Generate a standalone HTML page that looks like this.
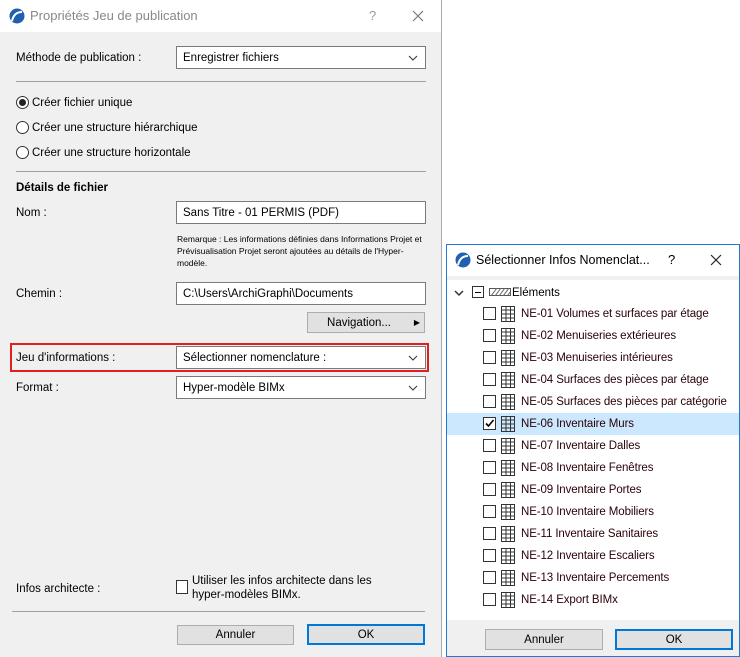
<!DOCTYPE html>
<html><head><meta charset="utf-8"><style>
*{box-sizing:border-box;margin:0;padding:0}
body{width:740px;height:657px;background:#fff;font-family:"Liberation Sans",sans-serif;font-size:11.5px;line-height:16px;color:#000;position:relative;overflow:hidden;white-space:nowrap}
.a{position:absolute}
.dlg{left:0;top:0;width:442px;height:657px;background:#f0f0f0;border-right:1px solid #aaa}
.tb{background:#fff}
.sel{background:#fff;border:1px solid #7a7a7a;height:23px;padding:3px 6px}
.chev{position:absolute;right:7px;top:7px}
.hr{height:1px;background:#a0a0a0}
.btn{background:#e1e1e1;border:1px solid #adadad;text-align:center;line-height:20px}
.ok{border:2px solid #0078d7;line-height:18px}
.radio{width:13px;height:13px;border:1px solid #333;border-radius:50%;background:#fff}
.cb{width:13px;height:13px;border:1px solid #333;background:#fff}
.row{left:447px;width:292px;height:22px}
.row .cb{position:absolute;left:36px;top:4px}
.row .g{position:absolute;left:54px;top:3px}
.row span{position:absolute;left:74px;top:3px;color:#2a0008;letter-spacing:-0.1px}
</style></head><body>
<div class="a dlg">
 <div class="a tb" style="left:0;top:0;width:441px;height:32px"></div>
 <svg class="a" style="left:9px;top:8px" width="16" height="16"><circle cx="8" cy="8" r="7.5" fill="#2060b0"/><path d="M3 13 Q5 4 13 4" stroke="#fff" stroke-width="2" fill="none"/></svg>
 <div class="a" style="left:30px;top:8px;font-size:13px;color:#888">Propriétés Jeu de publication</div>
 <div class="a" style="left:369px;top:8px;font-size:13px;color:#999">?</div>
 <svg class="a" style="left:412px;top:10px" width="12" height="12"><path d="M1 1l10 10M11 1L1 11" stroke="#777" stroke-width="1.2"/></svg>
 <div class="a" style="left:16px;top:50px">Méthode de publication :</div>
 <div class="a sel" style="left:176px;top:46px;width:250px">Enregistrer fichiers<svg class="chev" width="10" height="8"><path d="M1 2l4 4 4-4" stroke="#333" fill="none"/></svg></div>
 <div class="a hr" style="left:16px;top:81px;width:410px"></div>
 <div class="a radio" style="left:16px;top:96px"><div style="width:7px;height:7px;border-radius:50%;background:#222;margin:2px"></div></div>
 <div class="a" style="left:32px;top:95px">Créer fichier unique</div>
 <div class="a radio" style="left:16px;top:121px"></div>
 <div class="a" style="left:32px;top:120px">Créer une structure hiérarchique</div>
 <div class="a radio" style="left:16px;top:146px"></div>
 <div class="a" style="left:32px;top:145px">Créer une structure horizontale</div>
 <div class="a hr" style="left:16px;top:171px;width:410px"></div>
 <div class="a" style="left:16px;top:180px;font-weight:bold">Détails de fichier</div>
 <div class="a" style="left:16px;top:205px">Nom :</div>
 <div class="a sel" style="left:176px;top:201px;width:250px">Sans Titre - 01 PERMIS (PDF)</div>
 <div class="a" style="left:177px;top:233px;font-size:8.5px;line-height:12px;width:255px;white-space:normal">Remarque : Les informations définies dans Informations Projet et Prévisualisation Projet seront ajoutées au détails de l'Hyper-modèle.</div>
 <div class="a" style="left:16px;top:286px">Chemin :</div>
 <div class="a sel" style="left:176px;top:282px;width:250px">C:\Users\ArchiGraphi\Documents</div>
 <div class="a btn" style="left:307px;top:312px;width:118px;height:21px;padding-right:14px">Navigation...<span style="position:absolute;right:4px;top:0;font-size:8px">▶</span></div>
 <div class="a" style="left:10px;top:343px;width:419px;height:29px;border:2px solid #e02020"></div>
 <div class="a" style="left:16px;top:350px">Jeu d'informations :</div>
 <div class="a sel" style="left:176px;top:346px;width:250px">Sélectionner nomenclature :<svg class="chev" width="10" height="8"><path d="M1 2l4 4 4-4" stroke="#333" fill="none"/></svg></div>
 <div class="a" style="left:16px;top:380px">Format :</div>
 <div class="a sel" style="left:176px;top:376px;width:250px">Hyper-modèle BIMx<svg class="chev" width="10" height="8"><path d="M1 2l4 4 4-4" stroke="#333" fill="none"/></svg></div>
 <div class="a" style="left:16px;top:581px">Infos architecte :</div>
 <div class="a cb" style="left:176px;top:580px;width:12px;height:14px"></div>
 <div class="a" style="left:192px;top:574px;line-height:14px">Utiliser les infos architecte dans les<br>hyper-modèles BIMx.</div>
 <div class="a hr" style="left:12px;top:611px;width:413px"></div>
 <div class="a btn" style="left:177px;top:625px;width:117px;height:20px;line-height:19px">Annuler</div>
 <div class="a btn ok" style="left:307px;top:624px;width:118px;height:21px">OK</div>
</div>
<div class="a" style="left:446px;top:244px;width:294px;height:413px;background:#fff;border:1px solid #1e7bd6"></div>
<svg class="a" style="left:455px;top:252px" width="16" height="16"><circle cx="8" cy="8" r="7.5" fill="#2060b0"/><path d="M3 13 Q5 4 13 4" stroke="#fff" stroke-width="2" fill="none"/></svg>
<div class="a" style="left:476px;top:252px;font-size:12.5px">Sélectionner Infos Nomenclat...</div>
<div class="a" style="left:668px;top:252px;font-size:13px">?</div>
<svg class="a" style="left:710px;top:254px" width="12" height="12"><path d="M1 1l10 10M11 1L1 11" stroke="#222" stroke-width="1.2"/></svg>
<div class="a" style="left:447px;top:276px;width:292px;height:4px;background:#f0f0f0"></div>
<svg class="a" style="left:454px;top:289px" width="10" height="8"><path d="M1 2l4 4 4-4" stroke="#333" stroke-width="1.5" fill="none"/></svg>
<div class="a cb" style="left:472px;top:286px;width:12px;height:12px"><div style="width:6px;height:1px;background:#000;margin:5px 2px"></div></div>
<svg class="a" style="left:489px;top:288px" width="22" height="8"><rect x="0.5" y="0.5" width="21" height="7" fill="#fff" stroke="#555"/><path d="M2 8L8 0M6 8L12 0M10 8L16 0M14 8L20 0M18 8L22 3" stroke="#666"/></svg>
<div class="a" style="left:512px;top:285px">Eléments</div>
<div class="a row" style="top:303px"><div class="cb"></div><svg class="g" width="14" height="16"><path d="M.5 .5h13v15H.5zM5 .5v15M9.5 .5v15M.5 4h13M.5 8h13M.5 12h13" stroke="#333" fill="none"/></svg><span>NE-01 Volumes et surfaces par étage</span></div>
<div class="a row" style="top:325px"><div class="cb"></div><svg class="g" width="14" height="16"><path d="M.5 .5h13v15H.5zM5 .5v15M9.5 .5v15M.5 4h13M.5 8h13M.5 12h13" stroke="#333" fill="none"/></svg><span>NE-02 Menuiseries extérieures</span></div>
<div class="a row" style="top:347px"><div class="cb"></div><svg class="g" width="14" height="16"><path d="M.5 .5h13v15H.5zM5 .5v15M9.5 .5v15M.5 4h13M.5 8h13M.5 12h13" stroke="#333" fill="none"/></svg><span>NE-03 Menuiseries intérieures</span></div>
<div class="a row" style="top:369px"><div class="cb"></div><svg class="g" width="14" height="16"><path d="M.5 .5h13v15H.5zM5 .5v15M9.5 .5v15M.5 4h13M.5 8h13M.5 12h13" stroke="#333" fill="none"/></svg><span>NE-04 Surfaces des pièces par étage</span></div>
<div class="a row" style="top:391px"><div class="cb"></div><svg class="g" width="14" height="16"><path d="M.5 .5h13v15H.5zM5 .5v15M9.5 .5v15M.5 4h13M.5 8h13M.5 12h13" stroke="#333" fill="none"/></svg><span>NE-05 Surfaces des pièces par catégorie</span></div>
<div class="a row" style="top:413px;background:#cce8ff"><div class="cb"><svg width="11" height="11" style="display:block"><path d="M2 5.5l2.5 2.5L9.5 2" stroke="#000" stroke-width="1.6" fill="none"/></svg></div><svg class="g" width="14" height="16"><path d="M.5 .5h13v15H.5zM5 .5v15M9.5 .5v15M.5 4h13M.5 8h13M.5 12h13" stroke="#333" fill="none"/></svg><span>NE-06 Inventaire Murs</span></div>
<div class="a row" style="top:435px"><div class="cb"></div><svg class="g" width="14" height="16"><path d="M.5 .5h13v15H.5zM5 .5v15M9.5 .5v15M.5 4h13M.5 8h13M.5 12h13" stroke="#333" fill="none"/></svg><span>NE-07 Inventaire Dalles</span></div>
<div class="a row" style="top:457px"><div class="cb"></div><svg class="g" width="14" height="16"><path d="M.5 .5h13v15H.5zM5 .5v15M9.5 .5v15M.5 4h13M.5 8h13M.5 12h13" stroke="#333" fill="none"/></svg><span>NE-08 Inventaire Fenêtres</span></div>
<div class="a row" style="top:479px"><div class="cb"></div><svg class="g" width="14" height="16"><path d="M.5 .5h13v15H.5zM5 .5v15M9.5 .5v15M.5 4h13M.5 8h13M.5 12h13" stroke="#333" fill="none"/></svg><span>NE-09 Inventaire Portes</span></div>
<div class="a row" style="top:501px"><div class="cb"></div><svg class="g" width="14" height="16"><path d="M.5 .5h13v15H.5zM5 .5v15M9.5 .5v15M.5 4h13M.5 8h13M.5 12h13" stroke="#333" fill="none"/></svg><span>NE-10 Inventaire Mobiliers</span></div>
<div class="a row" style="top:523px"><div class="cb"></div><svg class="g" width="14" height="16"><path d="M.5 .5h13v15H.5zM5 .5v15M9.5 .5v15M.5 4h13M.5 8h13M.5 12h13" stroke="#333" fill="none"/></svg><span>NE-11 Inventaire Sanitaires</span></div>
<div class="a row" style="top:545px"><div class="cb"></div><svg class="g" width="14" height="16"><path d="M.5 .5h13v15H.5zM5 .5v15M9.5 .5v15M.5 4h13M.5 8h13M.5 12h13" stroke="#333" fill="none"/></svg><span>NE-12 Inventaire Escaliers</span></div>
<div class="a row" style="top:567px"><div class="cb"></div><svg class="g" width="14" height="16"><path d="M.5 .5h13v15H.5zM5 .5v15M9.5 .5v15M.5 4h13M.5 8h13M.5 12h13" stroke="#333" fill="none"/></svg><span>NE-13 Inventaire Percements</span></div>
<div class="a row" style="top:589px"><div class="cb"></div><svg class="g" width="14" height="16"><path d="M.5 .5h13v15H.5zM5 .5v15M9.5 .5v15M.5 4h13M.5 8h13M.5 12h13" stroke="#333" fill="none"/></svg><span>NE-14 Export BIMx</span></div>
<div class="a" style="left:447px;top:620px;width:292px;height:36px;background:#f0f0f0"></div>
<div class="a btn" style="left:485px;top:629px;width:118px;height:21px">Annuler</div>
<div class="a btn ok" style="left:615px;top:629px;width:118px;height:21px">OK</div>
</body></html>
